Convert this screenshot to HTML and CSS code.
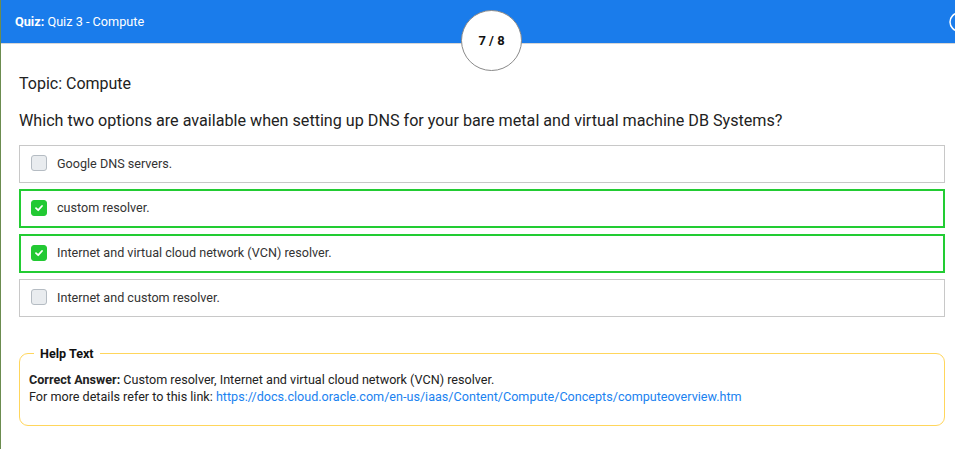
FILE: index.html
```html
<!DOCTYPE html>
<html>
<head>
<meta charset="utf-8">
<link rel="stylesheet" href="styles.css">
</head>
<body>
<div class="page">
  <header class="topbar">
    <div class="title"><b>Quiz:</b> Quiz 3 - Compute</div>
    <div class="counter">7 / 8</div>
    <svg class="corner-icon" width="22" height="22" viewBox="0 0 22 22"><circle cx="11" cy="11" r="9" fill="none" stroke="#fff" stroke-width="1.5"/></svg>
  </header>
  <main class="content">
    <div class="topic">Topic: Compute</div>
    <div class="question">Which two options are available when setting up DNS for your bare metal and virtual machine DB Systems?</div>
    <div class="options">
      <label class="option"><span class="box"></span><span>Google DNS servers.</span></label>
      <label class="option correct"><span class="box checked"><svg width="10" height="10" viewBox="0 0 10 10"><path d="M2 5.2 L4.2 7.2 L8 3" fill="none" stroke="#fff" stroke-width="1.8" stroke-linecap="round" stroke-linejoin="round"/></svg></span><span>custom resolver.</span></label>
      <label class="option correct"><span class="box checked"><svg width="10" height="10" viewBox="0 0 10 10"><path d="M2 5.2 L4.2 7.2 L8 3" fill="none" stroke="#fff" stroke-width="1.8" stroke-linecap="round" stroke-linejoin="round"/></svg></span><span>Internet and virtual cloud network (VCN) resolver.</span></label>
      <label class="option"><span class="box"></span><span>Internet and custom resolver.</span></label>
    </div>
    <fieldset class="help">
      <legend>Help Text</legend>
      <div><b>Correct Answer:</b> Custom resolver, Internet and virtual cloud network (VCN) resolver.</div>
      <div>For more details refer to this link: <a href="#">https://docs.cloud.oracle.com/en-us/iaas/Content/Compute/Concepts/computeoverview.htm</a></div>
    </fieldset>
  </main>
</div>
</body>
</html>
```
FILE: styles.css
```css
html, body {
  margin: 0;
  padding: 0;
  background: #fff;
}
body {
  font-family: Roboto, "Liberation Sans", sans-serif;
  color: #212529;
  overflow: hidden;
}
.page {
  border-left: 1px solid #6b8c4f;
  min-height: 449px;
  box-sizing: border-box;
}
.topbar {
  position: relative;
  height: 43px;
  background: #1a7ceb;
  border-bottom: 1px solid #d6d6d6;
  display: flex;
  align-items: center;
  justify-content: space-between;
  padding-left: 14px;
  color: #fff;
  font-size: 12.7px;
}
.title b {
  font-weight: 700;
}
.counter {
  position: absolute;
  left: 460px;
  top: 10px;
  width: 61px;
  height: 61px;
  box-sizing: border-box;
  border-radius: 50%;
  background: #fff;
  border: 1px solid #8a8a8a;
  color: #111;
  font-weight: 700;
  font-size: 13px;
  display: flex;
  align-items: center;
  justify-content: center;
  z-index: 2;
}
.corner-icon {
  margin-right: -15px;
}
.content {
  padding: 28px 10px 0 18px;
}
.topic {
  font-size: 16px;
  line-height: 24px;
  color: #222;
}
.question {
  margin-top: 13px;
  font-size: 16.15px;
  line-height: 24px;
  color: #222;
}
.options {
  margin-top: 12px;
  display: flex;
  flex-direction: column;
  gap: 6px;
}
.option {
  display: flex;
  align-items: center;
  gap: 10px;
  height: 38px;
  box-sizing: border-box;
  border: 1px solid #c8c8c8;
  padding-left: 11px;
  padding-bottom: 2px;
  font-size: 12.6px;
  color: #333;
}
.option.correct {
  border: 2px solid #22cc33;
  padding-left: 10px;
  height: 39px;
}
.box {
  width: 16px;
  height: 16px;
  box-sizing: border-box;
  border-radius: 3px;
  background: #e9ecef;
  border: 1px solid #b5bcc3;
  display: flex;
  align-items: center;
  justify-content: center;
}
.box.checked {
  background: #22c933;
  border-color: #22c933;
}
.help {
  margin: 28px 0 0 0;
  border: 1px solid #ffd65c;
  border-radius: 9px;
  padding: 9px 9px 20px 9px;
  font-size: 12.6px;
  line-height: 17px;
  color: #222;
}
.help legend {
  font-weight: 700;
  font-size: 12.6px;
  padding: 0 6px;
  margin-left: 5px;
  color: #111;
}
.help a {
  color: #1a82f0;
  text-decoration: none;
}
```
